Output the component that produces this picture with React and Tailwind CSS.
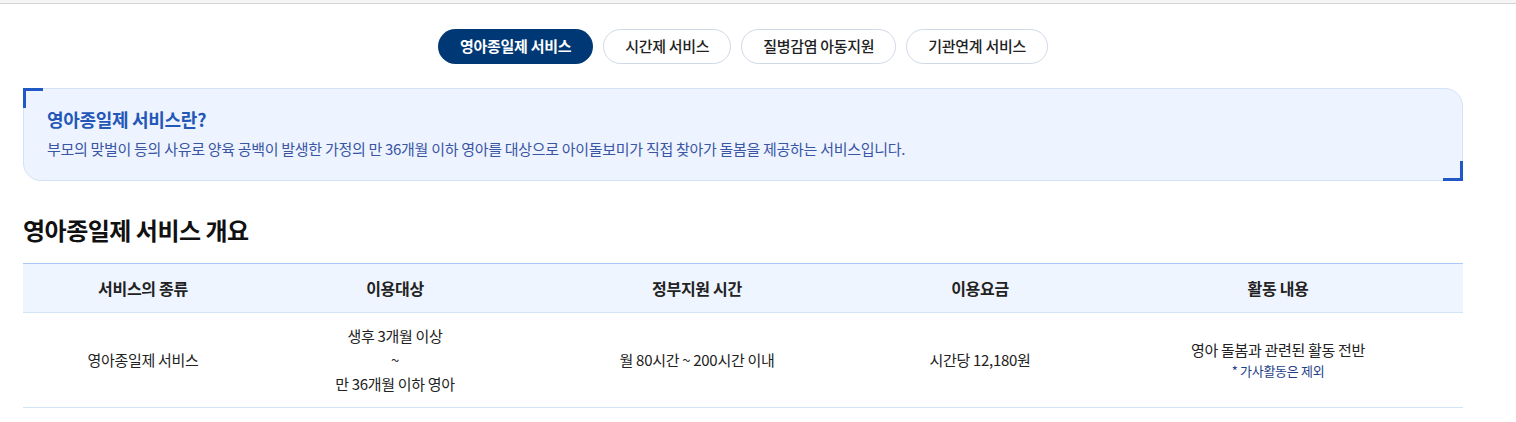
import React from "react";

const tabs = ["영아종일제 서비스", "시간제 서비스", "질병감염 아동지원", "기관연계 서비스"];

export default function App() {
  return (
    <div className="w-[1516px] bg-white" style={{ fontFamily: '"Noto Sans CJK KR", "Noto Sans", sans-serif' }}>
      <div className="h-[4px] bg-[#f5f5f5] border-b border-[#d4d4d4]" />
      <div className="px-[23px] w-[1486px]">
        <div className="flex justify-center gap-[10px] pt-[25px]">
          {tabs.map((t, i) => (
            <div
              key={t}
              className={
                i === 0
                  ? "h-[35px] px-[22px] flex items-center rounded-full bg-[#003875] text-white text-[15px] font-bold tracking-[-0.3px]"
                  : "h-[35px] px-[21px] flex items-center rounded-full bg-white border border-[#d1d9e6] text-[#222] text-[15px] font-medium tracking-[-0.3px]"
              }
            >
              {t}
            </div>
          ))}
        </div>

        <div className="relative mt-[24px] h-[93px] bg-[#edf4ff] border border-[#d3e2f8] rounded-tr-[18px] rounded-bl-[18px] pl-[23px] pt-[17px]">
          <span className="absolute -left-px -top-px w-[20px] h-[20px] border-l-[3px] border-t-[3px] border-[#2257c6]" />
          <span className="absolute -right-px -bottom-px w-[20px] h-[20px] border-r-[3px] border-b-[3px] border-[#2257c6]" />
          <div className="text-[18px] font-bold text-[#2457b8] leading-[26px] tracking-[-0.3px]">영아종일제 서비스란?</div>
          <div className="mt-[7px] text-[15px] text-[#3a55a4] leading-[20px] tracking-[-0.3px]">
            부모의 맞벌이 등의 사유로 양육 공백이 발생한 가정의 만 36개월 이하 영아를 대상으로 아이돌보미가 직접 찾아가 돌봄을 제공하는 서비스입니다.
          </div>
        </div>

        <h2 className="mt-[32px] text-[24px] font-bold text-[#111] leading-[34px] tracking-[-0.5px]">영아종일제 서비스 개요</h2>

        <div className="mt-[16px] border-t border-[#a9c8f3]">
          <div className="grid grid-cols-[240px_264px_340px_226px_370px] h-[49px] bg-[#eef5ff] border-b border-[#d5e3f7] items-center text-center text-[16px] font-bold text-[#222] tracking-[-0.3px]">
            <div>서비스의 종류</div>
            <div>이용대상</div>
            <div>정부지원 시간</div>
            <div>이용요금</div>
            <div>활동 내용</div>
          </div>
          <div className="grid grid-cols-[240px_264px_340px_226px_370px] h-[95px] border-b border-[#d5e3f7] items-center text-center text-[15px] text-[#222] tracking-[-0.3px]">
            <div>영아종일제 서비스</div>
            <div className="leading-[24px]">
              <div>생후 3개월 이상</div>
              <div>~</div>
              <div>만 36개월 이하 영아</div>
            </div>
            <div>월 80시간 ~ 200시간 이내</div>
            <div>시간당 12,180원</div>
            <div>
              <div className="leading-[22px]">영아 돌봄과 관련된 활동 전반</div>
              <div className="text-[13px] leading-[20px] text-[#1e3f8a]">* 가사활동은 제외</div>
            </div>
          </div>
        </div>
      </div>
    </div>
  );
}
